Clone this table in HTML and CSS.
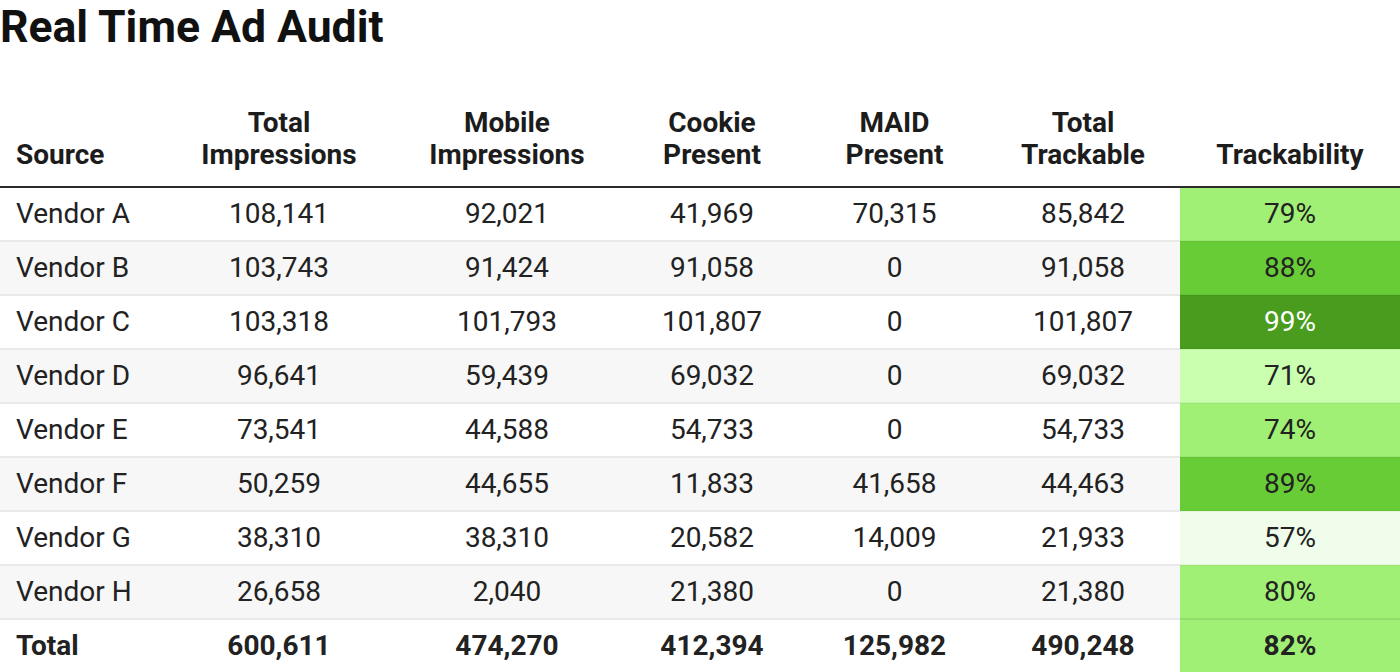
FILE: index.html
```html
<!DOCTYPE html>
<html lang="en">
<head>
<meta charset="utf-8">
<title>Real Time Ad Audit</title>
<link rel="stylesheet" href="styles.css">
</head>
<body>
<h1 class="title">Real Time Ad Audit</h1>
<table class="audit">
  <colgroup>
    <col class="c-source"><col class="c-total"><col class="c-mobile"><col class="c-cookie"><col class="c-maid"><col class="c-track"><col class="c-pct">
  </colgroup>
  <thead>
    <tr>
      <th class="left">Source</th>
      <th>Total<br>Impressions</th>
      <th>Mobile<br>Impressions</th>
      <th>Cookie<br>Present</th>
      <th>MAID<br>Present</th>
      <th>Total<br>Trackable</th>
      <th>Trackability</th>
    </tr>
  </thead>
  <tbody>
    <tr><td class="left">Vendor A</td><td>108,141</td><td>92,021</td><td>41,969</td><td>70,315</td><td>85,842</td><td class="pct g2">79%</td></tr>
    <tr><td class="left">Vendor B</td><td>103,743</td><td>91,424</td><td>91,058</td><td>0</td><td>91,058</td><td class="pct g3">88%</td></tr>
    <tr><td class="left">Vendor C</td><td>103,318</td><td>101,793</td><td>101,807</td><td>0</td><td>101,807</td><td class="pct g4">99%</td></tr>
    <tr><td class="left">Vendor D</td><td>96,641</td><td>59,439</td><td>69,032</td><td>0</td><td>69,032</td><td class="pct g1">71%</td></tr>
    <tr><td class="left">Vendor E</td><td>73,541</td><td>44,588</td><td>54,733</td><td>0</td><td>54,733</td><td class="pct g2">74%</td></tr>
    <tr><td class="left">Vendor F</td><td>50,259</td><td>44,655</td><td>11,833</td><td>41,658</td><td>44,463</td><td class="pct g3">89%</td></tr>
    <tr><td class="left">Vendor G</td><td>38,310</td><td>38,310</td><td>20,582</td><td>14,009</td><td>21,933</td><td class="pct g0">57%</td></tr>
    <tr><td class="left">Vendor H</td><td>26,658</td><td>2,040</td><td>21,380</td><td>0</td><td>21,380</td><td class="pct g2">80%</td></tr>
  </tbody>
  <tfoot>
    <tr><td class="left">Total</td><td>600,611</td><td>474,270</td><td>412,394</td><td>125,982</td><td>490,248</td><td class="pct g2">82%</td></tr>
  </tfoot>
</table>
</body>
</html>
```
FILE: styles.css
```css
html, body {
  margin: 0;
  padding: 0;
  background: #ffffff;
}
body {
  font-family: Roboto, "Liberation Sans", sans-serif;
  color: #222222;
  width: 1400px;
  overflow: hidden;
}
.title {
  margin: 0;
  font-size: 44.5px;
  font-weight: 700;
  line-height: 54px;
  color: #111111;
}
.audit {
  margin-top: 53px;
  border-collapse: collapse;
  table-layout: fixed;
  width: 1400px;
  font-size: 28px;
}
.c-source { width: 160px; }
.c-total { width: 238px; }
.c-mobile { width: 218px; }
.c-cookie { width: 192px; }
.c-maid { width: 178px; }
.c-track { width: 194px; }
.c-pct { width: 220px; }
.audit th {
  font-weight: 700;
  line-height: 32px;
  text-align: center;
  vertical-align: bottom;
  padding: 0 0 15px 0;
  border-bottom: 2px solid #2b2b2b;
  color: #1c1c1c;
}
.audit td {
  text-align: center;
  height: 52px;
  padding: 0;
  line-height: 32px;
  border-bottom: 2px solid #e9e9e9;
}
.audit th:nth-child(5),
.audit td:nth-child(5) {
  padding-right: 5px;
}
.audit .left {
  text-align: left;
  padding-left: 16px;
}
.audit tbody tr:nth-child(even) td {
  background: #f7f7f7;
}
.audit tfoot td {
  font-weight: 700;
  border-bottom: none;
  height: 52px;
}
.audit td.pct { border-bottom-color: rgba(0, 0, 0, 0.04); }
.audit tbody tr td.g0 { background: #f0fdea; }
.audit tbody tr td.g1 { background: #c9ffae; }
.audit tbody tr td.g2, .audit tfoot td.g2 { background: #a1f076; }
.audit tbody tr td.g3 { background: #68cc37; }
.audit tbody tr td.g4 { background: #4a9c1f; color: #ffffff; }
```
